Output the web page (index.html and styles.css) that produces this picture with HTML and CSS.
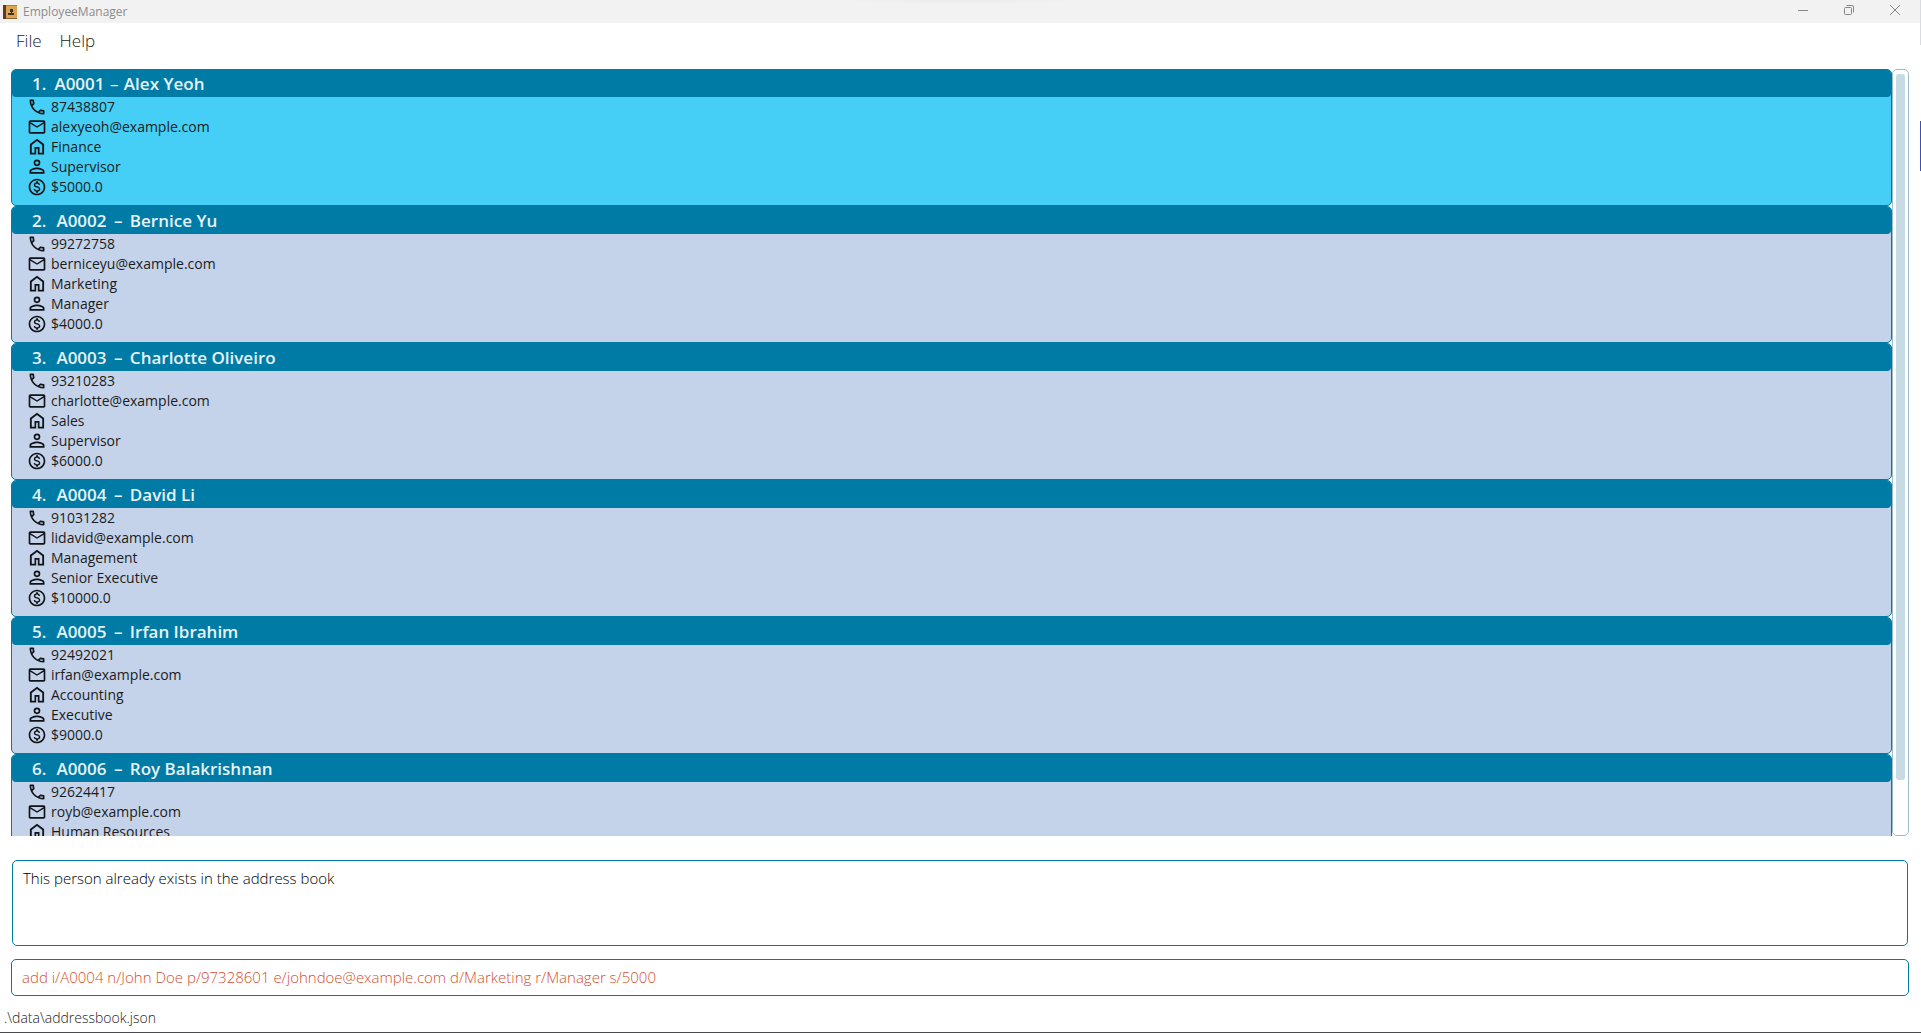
FILE: index.html
```html
<!DOCTYPE html>
<html lang="en">
<head>
<meta charset="utf-8">
<title>EmployeeManager</title>
<link rel="stylesheet" href="styles.css">
</head>
<body>
<svg class="sprite" aria-hidden="true">
  <symbol id="phone" viewBox="0 0 24 24"><path d="M6.54 5c.06.89.21 1.76.45 2.59l-1.2 1.2c-.41-1.2-.67-2.47-.76-3.79h1.51m9.86 12.02c.85.24 1.72.39 2.6.45v1.49c-1.32-.09-2.59-.35-3.8-.75l1.2-1.19M7.5 3H4c-.55 0-1 .45-1 1 0 9.39 7.61 17 17 17 .55 0 1-.45 1-1v-3.49c0-.55-.45-1-1-1-1.24 0-2.45-.2-3.57-.57-.1-.04-.21-.05-.31-.05-.26 0-.51.1-.71.29l-2.2 2.2c-2.83-1.45-5.15-3.76-6.59-6.59l2.2-2.2c.28-.28.36-.67.25-1.02C8.7 6.45 8.5 5.25 8.5 4c0-.55-.45-1-1-1z"/></symbol>
  <symbol id="mail" viewBox="0 0 24 24"><path d="M22 6c0-1.1-.9-2-2-2H4c-1.100 0-2 .9-2 2v12c0 1.100.9 2 2 2h16c1.100 0 2-.9 2-2V6zm-2 0l-8 5-8-5h16zm0 12H4V8l8 5 8-5v10z"/></symbol>
  <symbol id="home" viewBox="0 0 24 24"><path d="M12 2L3.500 8.500V21H11v-7h2v7h7.500V8.500zM5.700 9.600L12 4.800l6.300 4.800V19H15v-7H9v7H5.700z"/></symbol>
  <symbol id="person" viewBox="0 0 24 24"><path d="M12 3a4 4 0 1 0 0 8 4 4 0 0 0 0-8zm0 6a2 2 0 1 1 0-4 2 2 0 0 1 0 4zm0 3.500c-3 0-9 1.300-9 4.500v3h18v-3c0-3.200-6-4.500-9-4.500zm6.900 5.500H5.100v-1c.2-.9 3.900-2.400 6.900-2.400s6.700 1.500 6.900 2.400v1z"/></symbol>
  <symbol id="money" viewBox="0 0 24 24"><path d="M12 2C6.480 2 2 6.480 2 12s4.480 10 10 10 10-4.480 10-10S17.520 2 12 2zm0 18c-4.410 0-8-3.590-8-8s3.590-8 8-8 8 3.590 8 8-3.590 8-8 8zm.31-8.860c-1.770-.45-2.340-.94-2.340-1.670 0-.84.79-1.430 2.100-1.430 1.380 0 1.900.66 1.940 1.640h1.710c-.05-1.340-.87-2.570-2.490-2.970V5H10.900v1.690c-1.510.32-2.720 1.300-2.720 2.810 0 1.790 1.490 2.690 3.660 3.210 1.950.46 2.340 1.150 2.340 1.870 0 .53-.39 1.390-2.100 1.390-1.600 0-2.230-.72-2.320-1.640H8.040c.1 1.700 1.360 2.660 2.860 2.970V19h2.340v-1.670c1.520-.29 2.720-1.160 2.730-2.770-.01-2.200-1.900-2.960-3.660-3.420z"/></symbol>
</svg>

<header class="titlebar">
  <svg class="app-icon" viewBox="0 0 14 14" aria-hidden="true"><rect width="14" height="14" fill="#d9a550"/><rect width="3" height="14" fill="#5c3b22"/><path d="M3 0h11v1H3z" fill="#b57f35"/><path d="M3 13h11v1H3z" fill="#8d6234"/><path d="M7 4h3v3H9v1h2v2H5V8h3V7H7z" fill="#3d3326"/></svg>
  <h1 class="app-title">EmployeeManager</h1>
  <div class="window-controls">
    <button type="button" aria-label="Minimize"><svg viewBox="0 0 12 12"><path d="M1 6.500h10"/></svg></button>
    <button type="button" aria-label="Restore"><svg viewBox="0 0 12 12"><rect x="1.500" y="3.500" width="7" height="7" rx="1"/><path d="M3.500 1.500H9a1.500 1.500 0 0 1 1.500 1.500v5.500"/></svg></button>
    <button type="button" aria-label="Close"><svg viewBox="0 0 12 12"><path d="M1 1l10 10M11 1L1 11"/></svg></button>
  </div>
</header>

<nav class="menubar" aria-label="Main">
  <button type="button">File</button>
  <button type="button">Help</button>
</nav>

<main class="content">
  <section class="list-pane" aria-label="Employees">
    <ol class="list">
      <li class="card selected">
        <h2><span>1.</span><span>A0001 <span class="dash">–</span> Alex Yeoh</span></h2>
        <ul>
          <li><svg><use href="#phone"/></svg>87438807</li>
          <li><svg><use href="#mail"/></svg>alexyeoh@example.com</li>
          <li><svg><use href="#home"/></svg>Finance</li>
          <li><svg><use href="#person"/></svg>Supervisor</li>
          <li><svg><use href="#money"/></svg>$5000.0</li>
        </ul>
      </li>
      <li class="card">
        <h2><span>2.</span><span>A0002 <span class="dash">–</span> Bernice Yu</span></h2>
        <ul>
          <li><svg><use href="#phone"/></svg>99272758</li>
          <li><svg><use href="#mail"/></svg>berniceyu@example.com</li>
          <li><svg><use href="#home"/></svg>Marketing</li>
          <li><svg><use href="#person"/></svg>Manager</li>
          <li><svg><use href="#money"/></svg>$4000.0</li>
        </ul>
      </li>
      <li class="card">
        <h2><span>3.</span><span>A0003 <span class="dash">–</span> Charlotte Oliveiro</span></h2>
        <ul>
          <li><svg><use href="#phone"/></svg>93210283</li>
          <li><svg><use href="#mail"/></svg>charlotte@example.com</li>
          <li><svg><use href="#home"/></svg>Sales</li>
          <li><svg><use href="#person"/></svg>Supervisor</li>
          <li><svg><use href="#money"/></svg>$6000.0</li>
        </ul>
      </li>
      <li class="card">
        <h2><span>4.</span><span>A0004 <span class="dash">–</span> David Li</span></h2>
        <ul>
          <li><svg><use href="#phone"/></svg>91031282</li>
          <li><svg><use href="#mail"/></svg>lidavid@example.com</li>
          <li><svg><use href="#home"/></svg>Management</li>
          <li><svg><use href="#person"/></svg>Senior Executive</li>
          <li><svg><use href="#money"/></svg>$10000.0</li>
        </ul>
      </li>
      <li class="card">
        <h2><span>5.</span><span>A0005 <span class="dash">–</span> Irfan Ibrahim</span></h2>
        <ul>
          <li><svg><use href="#phone"/></svg>92492021</li>
          <li><svg><use href="#mail"/></svg>irfan@example.com</li>
          <li><svg><use href="#home"/></svg>Accounting</li>
          <li><svg><use href="#person"/></svg>Executive</li>
          <li><svg><use href="#money"/></svg>$9000.0</li>
        </ul>
      </li>
      <li class="card">
        <h2><span>6.</span><span>A0006 <span class="dash">–</span> Roy Balakrishnan</span></h2>
        <ul>
          <li><svg><use href="#phone"/></svg>92624417</li>
          <li><svg><use href="#mail"/></svg>royb@example.com</li>
          <li><svg><use href="#home"/></svg>Human Resources</li>
        </ul>
      </li>
    </ol>
    <div class="scrollbar" aria-hidden="true"><div class="thumb"></div></div>
  </section>

  <textarea class="result" aria-label="Result" readonly>This person already exists in the address book</textarea>
  <input class="command" type="text" aria-label="Command" spellcheck="false" value="add i/A0004 n/John Doe p/97328601 e/johndoe@example.com d/Marketing r/Manager s/5000">
</main>

<footer class="status">.\data\addressbook.json</footer>
<div class="edge-top" aria-hidden="true"></div>
<div class="edge" aria-hidden="true"></div>
</body>
</html>
```
FILE: styles.css
```css
* { box-sizing: border-box; }

body {
  margin: 0;
  height: 100vh;
  display: flex;
  flex-direction: column;
  background: #fff;
  color: #1c1c1c;
  font-family: "Open Sans", "Noto Sans", sans-serif;
  font-size: 14px;
  border-bottom: 1px solid #4a4a4c;
}

h1, h2, ol, ul { margin: 0; padding: 0; list-style: none; }

button {
  border: 0;
  padding: 0;
  background: none;
  color: inherit;
  font: inherit;
}

.sprite { position: absolute; width: 0; height: 0; }

.titlebar {
  flex: none;
  display: flex;
  align-items: center;
  height: 23px;
  padding-left: 3px;
  background: radial-gradient(120px 4px at 50% 0, #eaeaea, #f2f2f2);
}
.app-icon { width: 14px; height: 14px; }
.app-title {
  margin-left: 6px;
  font-size: 12px;
  font-weight: 400;
  color: #8c8c8c;
}
.window-controls {
  display: flex;
  align-self: flex-start;
  margin-left: auto;
  padding-right: 3px;
}
.window-controls button {
  display: flex;
  align-items: center;
  justify-content: center;
  width: 46px;
  height: 20px;
}
.window-controls svg { width: 12px; height: 12px; fill: none; stroke: #868686; }

.menubar {
  flex: none;
  display: flex;
  gap: 18px;
  height: 46px;
  padding: 6px 16px 0;
  font-size: 17px;
  font-weight: 300;
  line-height: 24px;
}
.menubar button { height: 24px; }

.content {
  flex: 1;
  min-height: 0;
  display: flex;
  flex-direction: column;
  padding: 0 12px 0 11px;
}

.list-pane { flex: 1; min-height: 0; display: flex; }
.list { flex: 1; overflow: hidden; }

.card {
  height: 137px;
  border: 1px solid #007ba5;
  border-radius: 5px;
  background: #c5d3ea;
}
.card.selected { background: #45cff6; }
.card h2 {
  display: flex;
  gap: 10px;
  height: 27px;
  padding-left: 20px;
  border-radius: 4px;
  background: #007ba5;
  color: #e6f3f8;
  font-size: 17px;
  font-weight: 600;
  line-height: 27px;
}
.card .dash { padding: 0 3px; }
.card.selected h2 { gap: 8px; }
.card.selected .dash { padding: 0 1px; font-weight: 400; }
.card ul { padding-left: 15px; }
.card li {
  display: flex;
  align-items: center;
  gap: 4px;
  height: 20px;
  line-height: 20px;
}
.card svg { width: 20px; height: 20px; fill: #101418; }

.scrollbar {
  width: 17px;
  padding: 4px 3px;
  border: 1px solid #99bdc9;
  border-radius: 5px;
}
.thumb { height: calc(100% - 51px); border-radius: 3px; background: #c7dbe4; }

.result, .command {
  display: block;
  border: 1px solid #007ba5;
  border-radius: 5px;
  background: #fff;
  outline: none;
  resize: none;
  font-family: inherit;
  font-size: 15px;
  font-weight: 300;
}
.result {
  flex: none;
  height: 86px;
  margin: 24px 1px 13px;
  padding: 6px 10px;
  color: #000;
  line-height: 22px;
}
.command {
  flex: none;
  height: 37px;
  padding: 0 10px 2px;
  color: #d4502f;
}

.status {
  flex: none;
  height: 36px;
  padding: 11px 4px 0;
  font-size: 14px;
  font-weight: 300;
  line-height: 22px;
}

/* Window frame visible along the right side */
.edge-top, .edge { position: absolute; right: 0; width: 1px; }
.edge-top { top: 0; height: 45px; background: #dadbe1; }
.edge { top: 121px; height: 50px; background: #3c4fb8; }
```
